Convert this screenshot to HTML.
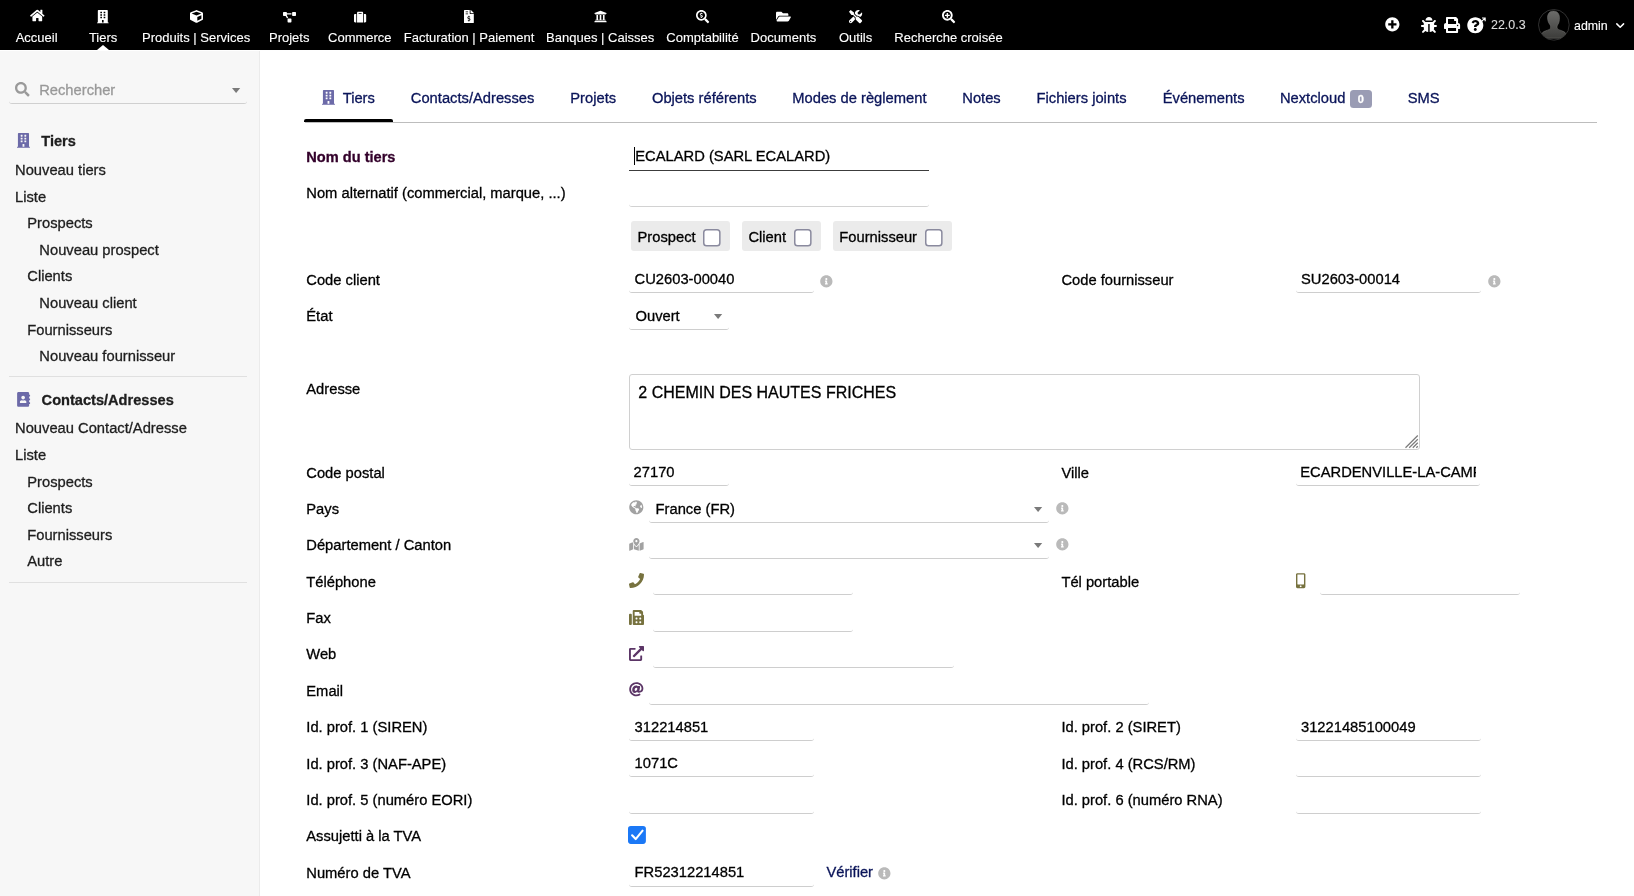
<!DOCTYPE html>
<html lang="fr">
<head>
<meta charset="utf-8">
<title>Tiers - ECALARD</title>
<style>
*{box-sizing:border-box;margin:0;padding:0}
html,body{width:1634px;height:896px;overflow:hidden;background:#fff}
body{font-family:"Liberation Sans",Arial,Helvetica,sans-serif;font-size:14.62px;color:#000;position:relative}
.abs{position:absolute;white-space:nowrap;line-height:1;-webkit-text-stroke:0.3px}
svg{position:absolute;overflow:visible}
#wrap{position:absolute;left:0;top:0;width:1634px;height:896px;will-change:transform}
#top{position:absolute;left:0;top:0;width:1634px;height:50px;background:#000}
#side{position:absolute;left:0;top:51px;width:260px;height:845px;background:#f7f7f7;border-right:1px solid #ebebeb}
</style>
</head>
<body>
<div id="wrap">
<div id="top">
<div class="abs" style="left:15.65px;top:31px;font-size:13px;color:#fff;-webkit-text-stroke:0.12px;">Accueil</div>
<svg style="left:29.79px;top:9.20px" width="14.62" height="13.00" viewBox="0 0 576 512" fill="#fff"><path d="M280.37 148.26L96 300.11V464a16 16 0 0 0 16 16l112.060-.29a16 16 0 0 0 15.920-16V368a16 16 0 0 1 16-16h64a16 16 0 0 1 16 16v95.640a16 16 0 0 0 16 16.050L464 480a16 16 0 0 0 16-16V300L295.670 148.260a12.190 12.190 0 0 0-15.300 0zM571.600 251.470L488 182.560V44.050a12 12 0 0 0-12-12h-56a12 12 0 0 0-12 12v72.610L318.470 43a48 48 0 0 0-61 0L4.340 251.470a12 12 0 0 0-1.600 16.900l25.500 31A12 12 0 0 0 45.150 301l235.220-193.740a12.190 12.190 0 0 1 15.300 0L530.900 301a12 12 0 0 0 16.900-1.600l25.500-31a12 12 0 0 0-1.700-16.930z"/></svg>
<div class="abs" style="left:88.90px;top:31px;font-size:13px;color:#fff;-webkit-text-stroke:0.12px;">Tiers</div>
<svg style="left:97.28px;top:9.60px" width="11.64" height="13.30" viewBox="0 0 448 512" fill="#fff"><path d="M436 480h-20V24c0-13.255-10.745-24-24-24H56C42.745 0 32 10.745 32 24v456H12c-6.627 0-12 5.373-12 12v20h448v-20c0-6.627-5.373-12-12-12zM128 76c0-6.627 5.373-12 12-12h40c6.627 0 12 5.373 12 12v40c0 6.627-5.373 12-12 12h-40c-6.627 0-12-5.373-12-12V76zm0 96c0-6.627 5.373-12 12-12h40c6.627 0 12 5.373 12 12v40c0 6.627-5.373 12-12 12h-40c-6.627 0-12-5.373-12-12v-40zm52 148h-40c-6.627 0-12-5.373-12-12v-40c0-6.627 5.373-12 12-12h40c6.627 0 12 5.373 12 12v40c0 6.627-5.373 12-12 12zm76 160h-64v-84c0-6.627 5.373-12 12-12h40c6.627 0 12 5.373 12 12v84zm64-172c0 6.627-5.373 12-12 12h-40c-6.627 0-12-5.373-12-12v-40c0-6.627 5.373-12 12-12h40c6.627 0 12 5.373 12 12v40zm0-96c0 6.627-5.373 12-12 12h-40c-6.627 0-12-5.373-12-12v-40c0-6.627 5.373-12 12-12h40c6.627 0 12 5.373 12 12v40zm0-96c0 6.627-5.373 12-12 12h-40c-6.627 0-12-5.373-12-12V76c0-6.627 5.373-12 12-12h40c6.627 0 12 5.373 12 12v40z"/></svg>
<div class="abs" style="left:142.03px;top:31px;font-size:13px;color:#fff;-webkit-text-stroke:0.12px;">Produits | Services</div>
<svg style="left:189.60px;top:9.80px" width="13.00" height="13.00" viewBox="0 0 512 512" fill="#fff"><path d="M239.1 6.3l-208 78c-18.700 7-31.100 25-31.100 45v225.100c0 18.200 10.300 34.800 26.500 42.900l208 104c13.500 6.800 29.400 6.800 42.900 0l208-104c16.300-8.100 26.500-24.800 26.500-42.900V129.300c0-20-12.400-37.900-31.100-44.900l-208-78C262 2.200 250 2.200 239.100 6.300zM256 68.400l192 72v1.100l-192 78-192-78v-1.100l192-72zm32 356V275.500l160-65v133.900l-160 80z"/></svg>
<div class="abs" style="left:268.97px;top:31px;font-size:13px;color:#fff;-webkit-text-stroke:0.12px;">Projets</div>
<svg style="left:282.70px;top:11.95px" width="13.00" height="10.40" viewBox="0 0 640 512" fill="#fff"><path d="M384 320H256c-17.670 0-32 14.330-32 32v128c0 17.670 14.330 32 32 32h128c17.670 0 32-14.330 32-32V352c0-17.670-14.330-32-32-32zM192 32c0-17.670-14.330-32-32-32H32C14.330 0 0 14.330 0 32v128c0 17.670 14.330 32 32 32h95.720l73.160 128.040C211.980 300.980 232.400 288 256 288h.28L192 175.510V128h224V64H192V32zM608 0H480c-17.670 0-32 14.330-32 32v128c0 17.670 14.330 32 32 32h128c17.670 0 32-14.330 32-32V32c0-17.670-14.330-32-32-32z"/></svg>
<div class="abs" style="left:328.02px;top:31px;font-size:13px;color:#fff;-webkit-text-stroke:0.12px;">Commerce</div>
<svg style="left:353.70px;top:10.75px" width="12.20" height="12.20" viewBox="0 0 512 512" fill="#fff"><path d="M128 480h256V80c0-26.500-21.500-48-48-48H176c-26.500 0-48 21.500-48 48v400zm64-384h128v32H192V96zm320 80v256c0 26.500-21.500 48-48 48h-48V128h48c26.500 0 48 21.500 48 48zM96 480H48c-26.500 0-48-21.500-48-48V176c0-26.500 21.500-48 48-48h48v352z"/></svg>
<div class="abs" style="left:403.72px;top:31px;font-size:13px;color:#fff;-webkit-text-stroke:0.12px;">Facturation | Paiement</div>
<svg style="left:464.09px;top:9.65px" width="9.82" height="13.10" viewBox="0 0 384 512" fill="#fff"><path d="M377 105L279.100 7c-4.500-4.500-10.600-7-17-7H256v128h128v-6.100c0-6.300-2.500-12.400-7-16.900zM64 62c0-4.420 3.580-8 8-8h80c4.420 0 8 3.580 8 8v20c0 4.420-3.580 8-8 8H72c-4.420 0-8-3.580-8-8V62zm0 100v-20c0-4.420 3.580-8 8-8h80c4.420 0 8 3.580 8 8v20c0 4.420-3.580 8-8 8H72c-4.420 0-8-3.580-8-8zm144 263.880V440c0 4.420-3.580 8-8 8h-16c-4.420 0-8-3.580-8-8v-24.290c-11.290-.58-22.270-4.520-31.370-11.350-3.900-2.930-4.100-8.770-.57-12.140l11.750-11.210c2.770-2.640 6.890-2.760 10.130-.73 3.870 2.420 8.260 3.720 12.820 3.720h28.110c6.500 0 11.800-5.920 11.800-13.190 0-5.950-3.610-11.190-8.770-12.730l-45-13.500c-18.590-5.580-31.580-23.420-31.580-43.390 0-24.520 19.050-44.440 42.670-45.070V232c0-4.420 3.580-8 8-8h16c4.420 0 8 3.580 8 8v24.290c11.290.58 22.270 4.510 31.370 11.350 3.900 2.930 4.100 8.770.57 12.140l-11.750 11.210c-2.770 2.640-6.890 2.760-10.130.73-3.870-2.430-8.260-3.720-12.820-3.720h-28.110c-6.500 0-11.800 5.920-11.800 13.190 0 5.950 3.610 11.190 8.770 12.730l45 13.500c18.590 5.580 31.580 23.420 31.580 43.390 0 24.530-19.050 44.440-42.670 45.070zM224 136V0H24C10.700 0 0 10.700 0 24v464c0 13.300 10.700 24 24 24h336c13.300 0 24-10.700 24-24V160H248c-13.200 0-24-10.800-24-24z"/></svg>
<div class="abs" style="left:546.12px;top:31px;font-size:13px;color:#fff;-webkit-text-stroke:0.12px;">Banques | Caisses</div>
<svg style="left:593.70px;top:9.80px" width="13.00" height="13.00" viewBox="0 0 512 512" fill="#fff"><path d="M496 128v16a8 8 0 0 1-8 8h-24v12c0 6.627-5.373 12-12 12H60c-6.627 0-12-5.373-12-12v-12H24a8 8 0 0 1-8-8v-16a8 8 0 0 1 4.941-7.392l232-88a7.996 7.996 0 0 1 6.118 0l232 88A8 8 0 0 1 496 128zm-24 304H40c-13.255 0-24 10.745-24 24v16a8 8 0 0 0 8 8h464a8 8 0 0 0 8-8v-16c0-13.255-10.745-24-24-24zM96 192v192H60c-6.627 0-12 5.373-12 12v20h416v-20c0-6.627-5.373-12-12-12h-36V192h-64v192h-64V192h-64v192h-64V192H96z"/></svg>
<div class="abs" style="left:666.37px;top:31px;font-size:13px;color:#fff;-webkit-text-stroke:0.12px;">Comptabilité</div>
<svg style="left:695.90px;top:9.70px" width="13.20" height="13.20" viewBox="0 0 512 512" fill="#fff"><path d="M505.040 442.660l-99.710-99.690c-4.500-4.500-10.600-7-17-7h-16.300c27.600-35.300 44-79.690 44-127.990C416.030 93.090 322.920 0 208.020 0S0 93.090 0 207.980s93.110 207.980 208.020 207.980c48.300 0 92.710-16.400 128.010-44v16.300c0 6.400 2.500 12.500 7 17l99.710 99.690c9.400 9.400 24.600 9.400 33.900 0l28.300-28.300c9.400-9.400 9.400-24.590.1-33.990zm-297.020-90.700c-79.540 0-144-64.340-144-143.980 0-79.530 64.350-143.980 144-143.980 79.540 0 144 64.340 144 143.980 0 79.530-64.350 143.980-144 143.980zm27.110-152.540l-45.010-13.500c-5.160-1.550-8.770-6.780-8.770-12.730 0-7.270 5.300-13.190 11.800-13.190h28.110c4.560 0 8.960 1.290 12.820 3.720 3.240 2.030 7.360 1.910 10.130-.73l11.750-11.210c3.530-3.370 3.330-9.210-.57-12.140-9.100-6.830-20.080-10.770-31.370-11.350V112c0-4.420-3.580-8-8-8h-16c-4.420 0-8 3.580-8 8v16.120c-23.630.63-42.680 20.550-42.680 45.070 0 19.970 12.990 37.810 31.580 43.390l45.010 13.500c5.160 1.550 8.770 6.780 8.770 12.730 0 7.270-5.300 13.190-11.800 13.190h-28.100c-4.560 0-8.960-1.290-12.820-3.720-3.240-2.030-7.360-1.910-10.130.73l-11.750 11.210c-3.530 3.370-3.330 9.210.57 12.140 9.100 6.830 20.080 10.770 31.370 11.350V304c0 4.420 3.580 8 8 8h16c4.420 0 8-3.580 8-8v-16.120c23.630-.63 42.680-20.540 42.680-45.070 0-19.970-12.990-37.810-31.590-43.390z"/></svg>
<div class="abs" style="left:750.53px;top:31px;font-size:13px;color:#fff;-webkit-text-stroke:0.12px;">Documents</div>
<svg style="left:775.98px;top:9.70px" width="14.85" height="13.20" viewBox="0 0 576 512" fill="#fff"><path d="M572.694 292.093L500.270 416.248A63.997 63.997 0 0 1 444.989 448H45.025c-18.523 0-30.064-20.093-20.731-36.093l72.424-124.155A64 64 0 0 1 152 256h399.964c18.523 0 30.064 20.093 20.730 36.093zM152 224h328v-48c0-26.510-21.490-48-48-48H272l-64-64H48C21.490 64 0 85.490 0 112v278.046l69.077-118.418C86.214 242.250 117.989 224 152 224z"/></svg>
<div class="abs" style="left:838.98px;top:31px;font-size:13px;color:#fff;-webkit-text-stroke:0.12px;">Outils</div>
<svg style="left:849.00px;top:9.70px" width="13.20" height="13.20" viewBox="0 0 512 512" fill="#fff"><path d="M501.100 395.700L384 278.600c-23.100-23.100-57.600-27.600-85.400-13.900L192 158.100V96L64 0 0 64l96 128h62.100l106.600 106.600c-13.600 27.800-9.200 62.300 13.900 85.400l117.100 117.100c14.600 14.600 38.200 14.600 52.700 0l52.700-52.700c14.500-14.600 14.500-38.200 0-52.700zM331.700 225c28.300 0 54.900 11 74.900 31l19.400 19.400c15.800-6.900 30.800-16.500 43.800-29.500 37.100-37.100 49.700-89.300 37.900-136.700-2.200-9-13.500-12.100-20.100-5.500l-74.400 74.400-67.900-11.300L334 98.900l74.400-74.400c6.600-6.600 3.400-17.900-5.700-20.200-47.400-11.700-99.600.9-136.600 37.900-28.500 28.500-41.900 66.100-41.200 103.600l82.100 82.100c8.100-1.900 16.500-2.900 24.700-2.900zm-103.900 82l-56.700-56.700L18.700 402.800c-25 25-25 65.500 0 90.500s65.500 25 90.500 0l123.600-123.600c-7.600-19.900-9.900-41.600-5-62.700zM64 472c-13.200 0-24-10.800-24-24 0-13.300 10.700-24 24-24s24 10.700 24 24c0 13.200-10.700 24-24 24z"/></svg>
<div class="abs" style="left:894.31px;top:31px;font-size:13px;color:#fff;-webkit-text-stroke:0.12px;">Recherche croisée</div>
<svg style="left:941.90px;top:9.70px" width="13.20" height="13.20" viewBox="0 0 512 512" fill="#fff"><path d="M304 192v32c0 6.600-5.400 12-12 12h-56v56c0 6.600-5.400 12-12 12h-32c-6.600 0-12-5.400-12-12v-56h-56c-6.600 0-12-5.400-12-12v-32c0-6.600 5.400-12 12-12h56v-56c0-6.600 5.400-12 12-12h32c6.600 0 12 5.400 12 12v56h56c6.600 0 12 5.400 12 12zm201 284.700L476.700 505c-9.400 9.400-24.600 9.400-33.900 0L343 405.300c-4.500-4.500-7-10.600-7-17V372c-35.300 27.600-79.700 44-128 44C93.100 416 0 322.900 0 208S93.100 0 208 0s208 93.100 208 208c0 48.300-16.400 92.700-44 128h16.300c6.400 0 12.500 2.500 17 7l99.700 99.700c9.300 9.400 9.300 24.600 0 34zM344 208c0-75.200-60.800-136-136-136S72 132.800 72 208s60.800 136 136 136 136-60.800 136-136z"/></svg>
<svg style="left:97px;top:45px" width="12" height="5" viewBox="0 0 12 5"><path d="M0 5L6 0L12 5Z" fill="#fff"/></svg>
<svg style="left:1385.40px;top:17.00px" width="14.70" height="14.70" viewBox="0 0 512 512" fill="#fff"><path d="M256 8C119 8 8 119 8 256s111 248 248 248 248-111 248-248S393 8 256 8zm144 276c0 6.600-5.400 12-12 12h-92v92c0 6.600-5.400 12-12 12h-56c-6.600 0-12-5.400-12-12v-92h-92c-6.600 0-12-5.400-12-12v-56c0-6.600 5.400-12 12-12h92v-92c0-6.600 5.400-12 12-12h56c6.600 0 12 5.400 12 12v92h92c6.600 0 12 5.400 12 12v56z"/></svg>
<svg style="left:1421.20px;top:17.20px" width="15.90" height="15.90" viewBox="0 0 512 512" fill="#fff"><path d="M511.988 288.900c-.478 17.430-15.217 31.100-32.653 31.100H424v16c0 21.864-4.882 42.584-13.600 61.145l60.228 60.228c12.496 12.497 12.496 32.758 0 45.255-12.498 12.497-32.759 12.496-45.256 0l-54.736-54.736C345.886 467.965 314.351 480 280 480V236c0-6.627-5.373-12-12-12h-24c-6.627 0-12 5.373-12 12v244c-34.351 0-65.886-12.035-90.636-32.108l-54.736 54.736c-12.498 12.497-32.759 12.496-45.256 0-12.496-12.497-12.496-32.758 0-45.255l60.228-60.228C92.882 378.584 88 357.864 88 336v-16H32.666C15.230 320 .491 306.330.013 288.900-.484 270.816 14.028 256 32 256h56v-58.745l-46.628-46.628c-12.496-12.497-12.496-32.758 0-45.255 12.498-12.497 32.758-12.497 45.256 0L141.255 160h229.489l54.627-54.627c12.498-12.497 32.758-12.497 45.256 0 12.496 12.497 12.496 32.758 0 45.255L424 197.255V256h56c17.972 0 32.484 14.816 31.988 32.900zM257 0c-61.856 0-112 50.144-112 112h224C369 50.144 318.856 0 257 0z"/></svg>
<svg style="left:1443.90px;top:17.20px" width="16.10" height="16.10" viewBox="0 0 512 512" fill="#fff"><path d="M448 192V77.250c0-8.490-3.370-16.620-9.370-22.630L393.370 9.370c-6-6-14.140-9.370-22.630-9.370H96C78.330 0 64 14.330 64 32v160c-35.350 0-64 28.650-64 64v112c0 8.840 7.160 16 16 16h48v96c0 17.670 14.330 32 32 32h320c17.670 0 32-14.330 32-32v-96h48c8.840 0 16-7.160 16-16V256c0-35.350-28.650-64-64-64zm-64 256H128v-96h256v96zm0-224H128V64h192v48c0 8.840 7.160 16 16 16h48v96zm48 72c-13.250 0-24-10.750-24-24 0-13.260 10.750-24 24-24s24 10.740 24 24c0 13.250-10.750 24-24 24z"/></svg>
<svg style="left:1467.00px;top:16.60px" width="16.60" height="16.60" viewBox="0 0 512 512" fill="#fff"><path d="M504 256c0 136.997-111.043 248-248 248S8 392.997 8 256C8 119.083 119.043 8 256 8s248 111.083 248 248zM262.655 90c-54.497 0-89.255 22.957-116.549 63.758-3.536 5.286-2.353 12.415 2.715 16.258l34.699 26.310c5.205 3.947 12.621 3.008 16.665-2.122 17.864-22.658 30.113-35.797 57.303-35.797 20.429 0 45.698 13.148 45.698 32.958 0 14.976-12.363 22.667-32.534 33.976C247.128 238.528 216 254.941 216 296v4c0 6.627 5.373 12 12 12h56c6.627 0 12-5.373 12-12v-1.333c0-28.462 83.186-29.647 83.186-106.667 0-58.002-60.165-102-116.531-102zM256 338c-25.365 0-46 20.635-46 46 0 25.364 20.635 46 46 46s46-20.636 46-46c0-25.365-20.635-46-46-46z"/><path d="M462 30H560V128M554 36L430 160" fill="none" stroke="#fff" stroke-width="36"/></svg>
<div class="abs" style="left:1491.00px;top:19px;font-size:12.45px;color:#dcdcdc;-webkit-text-stroke:0.1px;">22.0.3</div>
<svg style="left:1538.2px;top:9px" width="31.7" height="31.7" viewBox="0 0 32 32"><defs><clipPath id="av"><circle cx="16" cy="16" r="15.2"/></clipPath><linearGradient id="avg" x1="0" y1="0" x2="0" y2="1"><stop offset="0" stop-color="#6c6c6a"/><stop offset="0.55" stop-color="#525250"/><stop offset="1" stop-color="#3c3c3a"/></linearGradient></defs><circle cx="16" cy="16" r="15.5" fill="#000" stroke="#363636" stroke-width="0.9"/><g clip-path="url(#av)"><path d="M15.6 2C12 2 9.600 4.800 9.600 8.600C9.600 11.500 10.600 14 12 15.800C12.900 17 12.900 18.600 12.500 19.600C11.800 21 8.500 21.600 6 22.800C4.200 23.700 3.600 25.200 3.600 27L3.600 29.500L28.400 29.500L28.400 27C28.400 25.200 27.800 23.700 26 22.800C23.500 21.600 20.200 21 19.500 19.600C19.100 18.600 19.100 17 20 15.800C21.400 14 21.700 11.500 21.700 8.600C21.700 4.800 19.200 2 15.600 2Z" fill="url(#avg)" stroke="#7c7c7a" stroke-width="0.5"/></g></svg>
<div class="abs" style="left:1574.00px;top:20px;font-size:12.4px;color:#fff;-webkit-text-stroke:0.12px;">admin</div>
<svg style="left:1615.6px;top:22.6px" width="8.4" height="5.4" viewBox="0 0 8.4 5.4" fill="none" stroke="#fff" stroke-width="1.5" stroke-linecap="round" stroke-linejoin="round"><path d="M0.8 0.9 4.2 4.3 7.6 0.9"/></svg>
</div>
<div id="side"></div>
<svg style="left:15.10px;top:82.30px" width="14.60" height="14.60" viewBox="0 0 512 512" fill="#9a9a9a"><path d="M505 442.700L405.300 343c-4.500-4.500-10.600-7-17-7H372c27.600-35.300 44-79.700 44-128C416 93.100 322.900 0 208 0S0 93.100 0 208s93.100 208 208 208c48.300 0 92.700-16.400 128-44v16.300c0 6.400 2.500 12.500 7 17l99.700 99.700c9.400 9.400 24.600 9.400 33.900 0l28.300-28.300c9.400-9.400 9.400-24.600.1-34zM208 336c-70.700 0-128-57.200-128-128 0-70.700 57.200-128 128-128 70.700 0 128 57.200 128 128 0 70.700-57.200 128-128 128z"/></svg>
<div class="abs" style="left:39.20px;top:83px;font-size:14.72px;color:#999;">Rechercher</div>
<svg style="left:232.0px;top:88.2px" width="8.2" height="5.1" viewBox="0 0 8.2 5.1"><path d="M0 0H8.2L4.1 5.1Z" fill="#7a7a7a"/></svg>
<div class="abs" style="left:9.20px;top:97.30px;width:237.60px;height:7px;border-bottom:1px solid #d0d0d0;border-radius:0 0 3px 3px;"></div>
<svg style="left:17.10px;top:133.00px" width="12.95" height="14.80" viewBox="0 0 448 512" fill="#6c6aa8"><path d="M436 480h-20V24c0-13.255-10.745-24-24-24H56C42.745 0 32 10.745 32 24v456H12c-6.627 0-12 5.373-12 12v20h448v-20c0-6.627-5.373-12-12-12zM128 76c0-6.627 5.373-12 12-12h40c6.627 0 12 5.373 12 12v40c0 6.627-5.373 12-12 12h-40c-6.627 0-12-5.373-12-12V76zm0 96c0-6.627 5.373-12 12-12h40c6.627 0 12 5.373 12 12v40c0 6.627-5.373 12-12 12h-40c-6.627 0-12-5.373-12-12v-40zm52 148h-40c-6.627 0-12-5.373-12-12v-40c0-6.627 5.373-12 12-12h40c6.627 0 12 5.373 12 12v40c0 6.627-5.373 12-12 12zm76 160h-64v-84c0-6.627 5.373-12 12-12h40c6.627 0 12 5.373 12 12v84zm64-172c0 6.627-5.373 12-12 12h-40c-6.627 0-12-5.373-12-12v-40c0-6.627 5.373-12 12-12h40c6.627 0 12 5.373 12 12v40zm0-96c0 6.627-5.373 12-12 12h-40c-6.627 0-12-5.373-12-12v-40c0-6.627 5.373-12 12-12h40c6.627 0 12 5.373 12 12v40zm0-96c0 6.627-5.373 12-12 12h-40c-6.627 0-12-5.373-12-12V76c0-6.627 5.373-12 12-12h40c6.627 0 12 5.373 12 12v40z"/></svg>
<div class="abs" style="left:41.30px;top:134px;font-size:14.6px;color:#1e1e1e;font-weight:bold;">Tiers</div>
<div class="abs" style="left:15.05px;top:163px;font-size:14.72px;color:#1e1e1e;">Nouveau tiers</div>
<div class="abs" style="left:15.05px;top:190px;font-size:14.72px;color:#1e1e1e;">Liste</div>
<div class="abs" style="left:27.25px;top:216px;font-size:14.72px;color:#1e1e1e;">Prospects</div>
<div class="abs" style="left:39.35px;top:243px;font-size:14.72px;color:#1e1e1e;">Nouveau prospect</div>
<div class="abs" style="left:27.25px;top:269px;font-size:14.72px;color:#1e1e1e;">Clients</div>
<div class="abs" style="left:39.35px;top:296px;font-size:14.72px;color:#1e1e1e;">Nouveau client</div>
<div class="abs" style="left:27.25px;top:323px;font-size:14.72px;color:#1e1e1e;">Fournisseurs</div>
<div class="abs" style="left:39.35px;top:349px;font-size:14.72px;color:#1e1e1e;">Nouveau fournisseur</div>
<div class="abs" style="left:9.20px;top:376.00px;width:237.60px;height:1.00px;background:#e0e0e0;"></div>
<svg style="left:16.80px;top:392.20px" width="13.20" height="14.80" viewBox="0 0 448 512" fill="#6c6aa8"><path d="M436 160c6.600 0 12-5.400 12-12v-40c0-6.600-5.400-12-12-12h-20V48c0-26.500-21.500-48-48-48H48C21.500 0 0 21.500 0 48v416c0 26.500 21.500 48 48 48h320c26.500 0 48-21.500 48-48v-48h20c6.600 0 12-5.400 12-12v-40c0-6.600-5.400-12-12-12h-20v-64h20c6.600 0 12-5.400 12-12v-40c0-6.600-5.400-12-12-12h-20v-64h20zm-228-32c35.300 0 64 28.700 64 64s-28.700 64-64 64-64-28.700-64-64 28.700-64 64-64zm112 236.800c0 10.600-10 19.200-22.400 19.200H118.400C106 384 96 375.400 96 364.800v-19.200c0-31.800 30.100-57.600 67.200-57.600h5c12.300 5.100 25.700 8 39.800 8s27.600-2.900 39.800-8h5c37.100 0 67.200 25.800 67.200 57.600v19.200z"/></svg>
<div class="abs" style="left:41.60px;top:393px;font-size:14.6px;color:#1e1e1e;font-weight:bold;">Contacts/Adresses</div>
<div class="abs" style="left:15.05px;top:421px;font-size:14.72px;color:#1e1e1e;">Nouveau Contact/Adresse</div>
<div class="abs" style="left:15.05px;top:448px;font-size:14.72px;color:#1e1e1e;">Liste</div>
<div class="abs" style="left:27.25px;top:475px;font-size:14.72px;color:#1e1e1e;">Prospects</div>
<div class="abs" style="left:27.25px;top:501px;font-size:14.72px;color:#1e1e1e;">Clients</div>
<div class="abs" style="left:27.25px;top:528px;font-size:14.72px;color:#1e1e1e;">Fournisseurs</div>
<div class="abs" style="left:27.25px;top:554px;font-size:14.72px;color:#1e1e1e;">Autre</div>
<div class="abs" style="left:9.20px;top:582.00px;width:237.60px;height:1.00px;background:#e0e0e0;"></div>
<svg style="left:322.20px;top:90.00px" width="12.95" height="14.80" viewBox="0 0 448 512" fill="#6c6aa8"><path d="M436 480h-20V24c0-13.255-10.745-24-24-24H56C42.745 0 32 10.745 32 24v456H12c-6.627 0-12 5.373-12 12v20h448v-20c0-6.627-5.373-12-12-12zM128 76c0-6.627 5.373-12 12-12h40c6.627 0 12 5.373 12 12v40c0 6.627-5.373 12-12 12h-40c-6.627 0-12-5.373-12-12V76zm0 96c0-6.627 5.373-12 12-12h40c6.627 0 12 5.373 12 12v40c0 6.627-5.373 12-12 12h-40c-6.627 0-12-5.373-12-12v-40zm52 148h-40c-6.627 0-12-5.373-12-12v-40c0-6.627 5.373-12 12-12h40c6.627 0 12 5.373 12 12v40c0 6.627-5.373 12-12 12zm76 160h-64v-84c0-6.627 5.373-12 12-12h40c6.627 0 12 5.373 12 12v84zm64-172c0 6.627-5.373 12-12 12h-40c-6.627 0-12-5.373-12-12v-40c0-6.627 5.373-12 12-12h40c6.627 0 12 5.373 12 12v40zm0-96c0 6.627-5.373 12-12 12h-40c-6.627 0-12-5.373-12-12v-40c0-6.627 5.373-12 12-12h40c6.627 0 12 5.373 12 12v40zm0-96c0 6.627-5.373 12-12 12h-40c-6.627 0-12-5.373-12-12V76c0-6.627 5.373-12 12-12h40c6.627 0 12 5.373 12 12v40z"/></svg>
<div class="abs" style="left:342.70px;top:91px;font-size:14.72px;color:#0a1459;">Tiers</div>
<div class="abs" style="left:410.80px;top:91px;font-size:14.72px;color:#0a1459;">Contacts/Adresses</div>
<div class="abs" style="left:570.30px;top:91px;font-size:14.72px;color:#0a1459;">Projets</div>
<div class="abs" style="left:651.95px;top:91px;font-size:14.72px;color:#0a1459;">Objets référents</div>
<div class="abs" style="left:792.30px;top:91px;font-size:14.72px;color:#0a1459;">Modes de règlement</div>
<div class="abs" style="left:962.25px;top:91px;font-size:14.72px;color:#0a1459;">Notes</div>
<div class="abs" style="left:1036.55px;top:91px;font-size:14.72px;color:#0a1459;">Fichiers joints</div>
<div class="abs" style="left:1162.75px;top:91px;font-size:14.72px;color:#0a1459;">Événements</div>
<div class="abs" style="left:1279.95px;top:91px;font-size:14.72px;color:#0a1459;">Nextcloud</div>
<div class="abs" style="left:1407.75px;top:91px;font-size:14.72px;color:#0a1459;">SMS</div>
<div class="abs" style="left:1349.9px;top:90.2px;width:22px;height:17.6px;background:#9a9cb4;border-radius:3.5px;color:#fff;font-weight:bold;font-size:11px;line-height:19px;text-align:center">0</div>
<div class="abs" style="left:304.50px;top:122.00px;width:1292.50px;height:1.00px;background:#bdbdbd;"></div>
<div class="abs" style="left:304.4px;top:119.2px;width:88.6px;height:3.3px;background:#000;border-radius:2px 2px 0 0"></div>
<div class="abs" style="left:306.30px;top:150px;font-size:14.6px;color:#33002b;font-weight:bold;">Nom du tiers</div>
<div class="abs" style="left:306.30px;top:186px;font-size:14.72px;">Nom alternatif (commercial, marque, ...)</div>
<div class="abs" style="left:306.30px;top:273px;font-size:14.72px;">Code client</div>
<div class="abs" style="left:306.30px;top:309px;font-size:14.72px;">État</div>
<div class="abs" style="left:306.30px;top:382px;font-size:14.72px;">Adresse</div>
<div class="abs" style="left:306.30px;top:466px;font-size:14.72px;">Code postal</div>
<div class="abs" style="left:306.30px;top:502px;font-size:14.72px;">Pays</div>
<div class="abs" style="left:306.30px;top:538px;font-size:14.72px;">Département / Canton</div>
<div class="abs" style="left:306.30px;top:575px;font-size:14.72px;">Téléphone</div>
<div class="abs" style="left:306.30px;top:611px;font-size:14.72px;">Fax</div>
<div class="abs" style="left:306.30px;top:647px;font-size:14.72px;">Web</div>
<div class="abs" style="left:306.30px;top:684px;font-size:14.72px;">Email</div>
<div class="abs" style="left:306.30px;top:720px;font-size:14.72px;">Id. prof. 1 (SIREN)</div>
<div class="abs" style="left:306.30px;top:757px;font-size:14.72px;">Id. prof. 3 (NAF-APE)</div>
<div class="abs" style="left:306.30px;top:793px;font-size:14.72px;">Id. prof. 5 (numéro EORI)</div>
<div class="abs" style="left:306.30px;top:829px;font-size:14.72px;">Assujetti à la TVA</div>
<div class="abs" style="left:306.30px;top:866px;font-size:14.72px;">Numéro de TVA</div>
<div class="abs" style="left:1061.40px;top:273px;font-size:14.72px;">Code fournisseur</div>
<div class="abs" style="left:1061.40px;top:466px;font-size:14.72px;">Ville</div>
<div class="abs" style="left:1061.40px;top:575px;font-size:14.72px;">Tél portable</div>
<div class="abs" style="left:1061.40px;top:720px;font-size:14.72px;">Id. prof. 2 (SIRET)</div>
<div class="abs" style="left:1061.40px;top:757px;font-size:14.72px;">Id. prof. 4 (RCS/RM)</div>
<div class="abs" style="left:1061.40px;top:793px;font-size:14.72px;">Id. prof. 6 (numéro RNA)</div>
<div class="abs" style="left:634.40px;top:147.20px;width:1.00px;height:17.40px;background:#000;"></div>
<div class="abs" style="left:635.30px;top:149px;font-size:14.72px;">ECALARD (SARL ECALARD)</div>
<div class="abs" style="left:629.20px;top:164.40px;width:300.10px;height:7px;border-bottom:1px solid #3c3c3c;border-radius:0 0 0px 0px;"></div>
<div class="abs" style="left:629.20px;top:200.30px;width:300.10px;height:7px;border-bottom:1px solid #d2d2d2;border-radius:0 0 3px 3px;"></div>
<div class="abs" style="left:631.2px;top:221.3px;width:98.7px;height:29.4px;background:#ebebeb;border-radius:3px"></div>
<div class="abs" style="left:637.50px;top:230px;font-size:14.72px;">Prospect</div>
<svg style="left:703.3px;top:229.2px" width="17.6" height="17.5" viewBox="0 0 17.6 17.5"><rect x="0.75" y="0.75" width="16.1" height="16" rx="2.8" fill="#fff" stroke="#8a8a9e" stroke-width="1.5"/></svg>
<div class="abs" style="left:742.0px;top:221.3px;width:78.9px;height:29.4px;background:#ebebeb;border-radius:3px"></div>
<div class="abs" style="left:748.40px;top:230px;font-size:14.72px;">Client</div>
<svg style="left:794.4px;top:229.2px" width="17.6" height="17.5" viewBox="0 0 17.6 17.5"><rect x="0.75" y="0.75" width="16.1" height="16" rx="2.8" fill="#fff" stroke="#8a8a9e" stroke-width="1.5"/></svg>
<div class="abs" style="left:833.1px;top:221.3px;width:119.1px;height:29.4px;background:#ebebeb;border-radius:3px"></div>
<div class="abs" style="left:839.30px;top:230px;font-size:14.72px;">Fournisseur</div>
<svg style="left:925.2px;top:229.2px" width="17.6" height="17.5" viewBox="0 0 17.6 17.5"><rect x="0.75" y="0.75" width="16.1" height="16" rx="2.8" fill="#fff" stroke="#8a8a9e" stroke-width="1.5"/></svg>
<div class="abs" style="left:634.60px;top:272px;font-size:14.72px;">CU2603-00040</div>
<div class="abs" style="left:629.20px;top:286.20px;width:184.70px;height:7px;border-bottom:1px solid #cecece;border-radius:0 0 3px 3px;"></div>
<svg style="left:820.45px;top:274.85px" width="12.70" height="12.70" viewBox="0 0 512 512" fill="#bababa"><path d="M256 8C119.043 8 8 119.083 8 256c0 136.997 111.043 248 248 248s248-111.003 248-248C504 119.083 392.957 8 256 8zm0 110c23.196 0 42 18.804 42 42s-18.804 42-42 42-42-18.804-42-42 18.804-42 42-42zm56 254c0 6.627-5.373 12-12 12h-88c-6.627 0-12-5.373-12-12v-24c0-6.627 5.373-12 12-12h12v-64h-12c-6.627 0-12-5.373-12-12v-24c0-6.627 5.373-12 12-12h64c6.627 0 12 5.373 12 12v100h12c6.627 0 12 5.373 12 12v24z"/></svg>
<div class="abs" style="left:1301.00px;top:272px;font-size:14.72px;">SU2603-00014</div>
<div class="abs" style="left:1296.20px;top:286.20px;width:184.40px;height:7px;border-bottom:1px solid #cecece;border-radius:0 0 3px 3px;"></div>
<svg style="left:1487.55px;top:274.85px" width="12.70" height="12.70" viewBox="0 0 512 512" fill="#bababa"><path d="M256 8C119.043 8 8 119.083 8 256c0 136.997 111.043 248 248 248s248-111.003 248-248C504 119.083 392.957 8 256 8zm0 110c23.196 0 42 18.804 42 42s-18.804 42-42 42-42-18.804-42-42 18.804-42 42-42zm56 254c0 6.627-5.373 12-12 12h-88c-6.627 0-12-5.373-12-12v-24c0-6.627 5.373-12 12-12h12v-64h-12c-6.627 0-12-5.373-12-12v-24c0-6.627 5.373-12 12-12h64c6.627 0 12 5.373 12 12v100h12c6.627 0 12 5.373 12 12v24z"/></svg>
<div class="abs" style="left:635.50px;top:309px;font-size:14.72px;">Ouvert</div>
<svg style="left:713.9px;top:314.2px" width="8.2" height="5.1" viewBox="0 0 8.2 5.1"><path d="M0 0H8.2L4.1 5.1Z" fill="#7a7a7a"/></svg>
<div class="abs" style="left:629.20px;top:322.80px;width:99.80px;height:7px;border-bottom:1px solid #cecece;border-radius:0 0 3px 3px;"></div>
<div class="abs" style="left:629.2px;top:374.2px;width:791px;height:75.8px;border:1px solid #d0d0d0;border-radius:3px;background:#fff"></div>
<div class="abs" style="left:638.30px;top:385px;font-size:16px;">2 CHEMIN DES HAUTES FRICHES</div>
<svg style="left:1405px;top:435px" width="13" height="13" viewBox="0 0 13 13" stroke="#7c7c7c" stroke-width="1.25" fill="none"><path d="M0.500 12.800 12.800 0.500M4.200 12.800 12.800 4.200M7.800 12.800 12.800 7.800M11.300 12.800 12.800 11.300"/></svg>
<div class="abs" style="left:633.60px;top:465px;font-size:14.72px;">27170</div>
<div class="abs" style="left:629.20px;top:479.00px;width:99.60px;height:7px;border-bottom:1px solid #cecece;border-radius:0 0 3px 3px;"></div>
<div class="abs" style="left:1296.2px;top:462px;width:179.6px;height:22px;overflow:hidden"><div class="abs" style="left:4.1px;top:3px;font-size:14.72px">ECARDENVILLE-LA-CAMPAGNE</div></div>
<div class="abs" style="left:1296.20px;top:479.00px;width:183.80px;height:7px;border-bottom:1px solid #cecece;border-radius:0 0 3px 3px;"></div>
<svg style="left:629.00px;top:500.20px" width="14.60" height="14.60" viewBox="0 0 496 512" fill="#a2a2a2"><path d="M248 8C111.030 8 0 119.030 0 256s111.030 248 248 248 248-111.030 248-248S384.970 8 248 8zm82.290 357.600c-3.900 3.880-7.990 7.950-11.310 11.280-2.990 3-5.100 6.700-6.170 10.710-1.510 5.660-2.730 11.380-4.770 16.870l-17.390 46.850c-13.760 3-28 4.690-42.650 4.690v-27.380c1.690-12.620-7.640-36.260-22.630-51.250-6-6-9.370-14.140-9.370-22.630v-32.010c0-11.640-6.270-22.340-16.460-27.970-14.370-7.950-34.810-19.060-48.810-26.110-11.480-5.780-22.100-13.140-31.650-21.750l-.8-.72a114.792 114.792 0 0 1-18.060-20.740c-9.380-13.770-24.660-36.420-34.590-51.140 20.470-45.500 57.360-82.040 103.200-101.890l24.010 12.010C203.480 89.740 216 82.010 216 70.110v-11.300c7.990-1.290 16.120-2.110 24.390-2.420l28.300 28.300c6.250 6.250 6.250 16.380 0 22.630L264 112l-10.340 10.340c-3.120 3.120-3.120 8.190 0 11.310l4.690 4.690c3.120 3.120 3.120 8.190 0 11.310l-8 8a8.008 8.008 0 0 1-5.660 2.340h-8.990c-2.080 0-4.080.81-5.580 2.270l-9.920 9.650a8.008 8.008 0 0 0-1.580 9.310l15.590 31.190c2.660 5.320-1.210 11.580-7.150 11.580h-5.640c-1.930 0-3.790-.7-5.240-1.960l-9.280-8.060a16.017 16.017 0 0 0-15.550-3.100l-31.170 10.390a11.950 11.950 0 0 0-8.170 11.340c0 4.530 2.560 8.660 6.610 10.690l11.080 5.540c9.410 4.710 19.790 7.160 30.310 7.160s22.590 27.290 32 32h66.750c8.490 0 16.620 3.370 22.630 9.370l13.690 13.690a30.503 30.503 0 0 1 8.930 21.570 46.536 46.536 0 0 1-13.720 32.980zM417 274.250c-5.790-1.450-10.840-5-14.150-9.970l-17.980-26.970a23.970 23.970 0 0 1 0-26.620l19.590-29.380c2.320-3.470 5.500-6.290 9.240-8.150l12.980-6.490C440.200 193.590 448 223.870 448 256c0 8.670-.74 17.160-1.820 25.540L417 274.250z"/></svg>
<div class="abs" style="left:655.60px;top:502px;font-size:14.72px;">France (FR)</div>
<div class="abs" style="left:648.90px;top:515.90px;width:399.70px;height:7px;border-bottom:1px solid #cecece;border-radius:0 0 3px 3px;"></div>
<svg style="left:1034.0px;top:506.8px" width="8.2" height="5.1" viewBox="0 0 8.2 5.1"><path d="M0 0H8.2L4.1 5.1Z" fill="#7a7a7a"/></svg>
<svg style="left:1056.10px;top:501.85px" width="12.70" height="12.70" viewBox="0 0 512 512" fill="#bababa"><path d="M256 8C119.043 8 8 119.083 8 256c0 136.997 111.043 248 248 248s248-111.003 248-248C504 119.083 392.957 8 256 8zm0 110c23.196 0 42 18.804 42 42s-18.804 42-42 42-42-18.804-42-42 18.804-42 42-42zm56 254c0 6.627-5.373 12-12 12h-88c-6.627 0-12-5.373-12-12v-24c0-6.627 5.373-12 12-12h12v-64h-12c-6.627 0-12-5.373-12-12v-24c0-6.627 5.373-12 12-12h64c6.627 0 12 5.373 12 12v100h12c6.627 0 12 5.373 12 12v24z"/></svg>
<svg style="left:628.80px;top:537.80px" width="14.80" height="12.80" viewBox="0 0 576 512" fill="#a2a2a2"><path d="M288 0c-69.590 0-126 56.410-126 126 0 56.260 82.350 158.800 113.900 196.020 6.390 7.540 17.820 7.540 24.200 0C331.650 284.800 414 182.260 414 126 414 56.410 357.590 0 288 0zm0 168c-23.200 0-42-18.800-42-42s18.800-42 42-42 42 18.800 42 42-18.800 42-42 42zM20.120 215.950A32.006 32.006 0 0 0 0 245.660v250.320c0 11.320 11.430 19.060 21.940 14.860L160 448V214.920c-8.840-15.980-16.070-31.540-21.250-46.420L20.120 215.950zM288 359.670c-14.070 0-27.380-6.180-36.510-16.960-19.660-23.200-40.570-49.620-59.490-76.720v182l192 64V266c-18.920 27.090-39.820 53.520-59.490 76.720-9.130 10.770-22.440 16.950-36.510 16.950zm266.060-198.510L416 224v288l139.880-55.950A31.996 31.996 0 0 0 576 426.340V176.020c0-11.320-11.430-19.060-21.940-14.860z"/></svg>
<div class="abs" style="left:648.90px;top:552.00px;width:399.70px;height:7px;border-bottom:1px solid #cecece;border-radius:0 0 3px 3px;"></div>
<svg style="left:1034.0px;top:542.9px" width="8.2" height="5.1" viewBox="0 0 8.2 5.1"><path d="M0 0H8.2L4.1 5.1Z" fill="#7a7a7a"/></svg>
<svg style="left:1056.10px;top:537.95px" width="12.70" height="12.70" viewBox="0 0 512 512" fill="#bababa"><path d="M256 8C119.043 8 8 119.083 8 256c0 136.997 111.043 248 248 248s248-111.003 248-248C504 119.083 392.957 8 256 8zm0 110c23.196 0 42 18.804 42 42s-18.804 42-42 42-42-18.804-42-42 18.804-42 42-42zm56 254c0 6.627-5.373 12-12 12h-88c-6.627 0-12-5.373-12-12v-24c0-6.627 5.373-12 12-12h12v-64h-12c-6.627 0-12-5.373-12-12v-24c0-6.627 5.373-12 12-12h64c6.627 0 12 5.373 12 12v100h12c6.627 0 12 5.373 12 12v24z"/></svg>
<svg style="left:629.00px;top:572.80px" width="15.00" height="15.00" viewBox="0 0 512 512" fill="#77723f"><path d="M493.400 24.600l-104-24c-11.300-2.600-22.900 3.300-27.500 13.900l-48 112c-4.200 9.800-1.400 21.300 6.900 28l60.600 49.600c-36 76.700-98.900 140.500-177.200 177.200l-49.600-60.600c-6.800-8.300-18.200-11.100-28-6.900l-112 48C3.900 366.500-2 378.100.6 389.400l24 104C27.100 504.200 36.700 512 48 512c256.100 0 464-207.500 464-464 0-11.200-7.700-20.900-18.600-23.400z"/></svg>
<div class="abs" style="left:653.40px;top:588.40px;width:199.20px;height:7px;border-bottom:1px solid #cecece;border-radius:0 0 3px 3px;"></div>
<svg style="left:1296.40px;top:572.60px" width="9.40" height="15.40" viewBox="0 0 320 512" fill="#77723f"><path d="M272 0H48C21.500 0 0 21.500 0 48v416c0 26.500 21.500 48 48 48h224c26.500 0 48-21.500 48-48V48c0-26.500-21.500-48-48-48zM160 480c-17.700 0-32-14.300-32-32s14.300-32 32-32 32 14.300 32 32-14.300 32-32 32zm112-108c0 6.600-5.400 12-12 12H60c-6.600 0-12-5.400-12-12V60c0-6.600 5.400-12 12-12h200c6.600 0 12 5.400 12 12v312z"/></svg>
<div class="abs" style="left:1320.20px;top:588.40px;width:199.60px;height:7px;border-bottom:1px solid #cecece;border-radius:0 0 3px 3px;"></div>
<svg style="left:629.00px;top:610.00px" width="15.00" height="15.00" viewBox="0 0 512 512" fill="#77723f"><path d="M480 160V77.250a32 32 0 0 0-9.380-22.630L425.370 9.370A32 32 0 0 0 402.750 0H160a32 32 0 0 0-32 32v448a32 32 0 0 0 32 32h320a32 32 0 0 0 32-32V192a32 32 0 0 0-32-32zM288 432a16 16 0 0 1-16 16h-32a16 16 0 0 1-16-16v-32a16 16 0 0 1 16-16h32a16 16 0 0 1 16 16zm0-128a16 16 0 0 1-16 16h-32a16 16 0 0 1-16-16v-32a16 16 0 0 1 16-16h32a16 16 0 0 1 16 16zm128 128a16 16 0 0 1-16 16h-32a16 16 0 0 1-16-16v-32a16 16 0 0 1 16-16h32a16 16 0 0 1 16 16zm0-128a16 16 0 0 1-16 16h-32a16 16 0 0 1-16-16v-32a16 16 0 0 1 16-16h32a16 16 0 0 1 16 16zm0-112H192V64h160v48a16 16 0 0 0 16 16h48zM64 128H32a32 32 0 0 0-32 32v320a32 32 0 0 0 32 32h32a32 32 0 0 0 32-32V160a32 32 0 0 0-32-32z"/></svg>
<div class="abs" style="left:653.40px;top:624.60px;width:199.20px;height:7px;border-bottom:1px solid #cecece;border-radius:0 0 3px 3px;"></div>
<svg style="left:629.00px;top:645.80px" width="15.00" height="15.00" viewBox="0 0 512 512" fill="#5b3566"><path d="M432 320H400a16 16 0 0 0-16 16V448H64V128H208a16 16 0 0 0 16-16V80a16 16 0 0 0-16-16H48A48 48 0 0 0 0 112V464a48 48 0 0 0 48 48H400a48 48 0 0 0 48-48V336A16 16 0 0 0 432 320ZM488 0h-128c-21.370 0-32.050 25.910-17 41l35.730 35.730L135 320.370a24 24 0 0 0 0 34L157.670 377a24 24 0 0 0 34 0L435.280 133.320 471 169c15 15 41 4.500 41-17V24A24 24 0 0 0 488 0Z"/></svg>
<div class="abs" style="left:653.40px;top:660.80px;width:300.20px;height:7px;border-bottom:1px solid #cecece;border-radius:0 0 3px 3px;"></div>
<svg style="left:629.20px;top:682.20px" width="14.60" height="14.60" viewBox="0 0 512 512" fill="#5b3566"><path d="M256 8C118.941 8 8 118.919 8 256c0 137.059 110.919 248 248 248 48.154 0 95.342-14.140 135.408-40.223 12.005-7.815 14.625-24.288 5.552-35.372l-10.177-12.433c-7.671-9.371-21.179-11.667-31.373-5.129C325.920 429.757 291.314 440 256 440c-101.458 0-184-82.542-184-184S154.542 72 256 72c100.139 0 184 57.619 184 160 0 38.786-21.093 79.742-58.170 83.693-17.349-.454-16.910-12.857-13.476-30.024l23.433-121.110C394.653 149.750 383.308 136 368.225 136h-44.981a13.518 13.518 0 0 0-13.432 11.993l-.010.092c-14.697-17.901-40.448-21.775-59.971-21.775-74.580 0-137.831 62.234-137.831 151.460 0 65.303 36.785 105.870 96 105.870 26.984 0 57.369-15.637 74.991-38.333 9.522 34.104 40.613 34.103 70.710 34.103C462.609 379.410 504 307.798 504 232 504 95.653 394.023 8 256 8zm-21.680 304.430c-22.249 0-36.070-15.623-36.070-40.771 0-44.993 30.779-72.729 58.630-72.729 22.292 0 35.601 15.241 35.601 40.770 0 45.061-33.875 72.730-58.161 72.730z"/></svg>
<div class="abs" style="left:648.60px;top:698.20px;width:500.00px;height:7px;border-bottom:1px solid #cecece;border-radius:0 0 3px 3px;"></div>
<div class="abs" style="left:634.60px;top:720px;font-size:14.72px;">312214851</div>
<div class="abs" style="left:629.20px;top:733.80px;width:184.70px;height:7px;border-bottom:1px solid #cecece;border-radius:0 0 3px 3px;"></div>
<div class="abs" style="left:1301.00px;top:720px;font-size:14.72px;">31221485100049</div>
<div class="abs" style="left:1296.20px;top:733.80px;width:184.40px;height:7px;border-bottom:1px solid #cecece;border-radius:0 0 3px 3px;"></div>
<div class="abs" style="left:634.60px;top:756px;font-size:14.72px;">1071C</div>
<div class="abs" style="left:629.20px;top:770.00px;width:184.70px;height:7px;border-bottom:1px solid #cecece;border-radius:0 0 3px 3px;"></div>
<div class="abs" style="left:1296.20px;top:770.00px;width:184.40px;height:7px;border-bottom:1px solid #cecece;border-radius:0 0 3px 3px;"></div>
<div class="abs" style="left:629.20px;top:806.60px;width:184.70px;height:7px;border-bottom:1px solid #cecece;border-radius:0 0 3px 3px;"></div>
<div class="abs" style="left:1296.20px;top:806.60px;width:184.40px;height:7px;border-bottom:1px solid #cecece;border-radius:0 0 3px 3px;"></div>
<svg style="left:628px;top:826px" width="17.9" height="17.9" viewBox="0 0 17.9 17.9"><rect x="0" y="0" width="17.9" height="17.9" rx="2.8" fill="#1b78f6"/><path d="M4.1 9.3 7.7 13.100 14.600 4.700" fill="none" stroke="#fff" stroke-width="2.1" stroke-linecap="round" stroke-linejoin="round"/></svg>
<div class="abs" style="left:634.60px;top:865px;font-size:14.72px;">FR52312214851</div>
<div class="abs" style="left:629.20px;top:879.80px;width:184.70px;height:7px;border-bottom:1px solid #cecece;border-radius:0 0 3px 3px;"></div>
<div class="abs" style="left:826.40px;top:865px;font-size:14.72px;color:#0a1459;">Vérifier</div>
<svg style="left:877.75px;top:867.25px" width="12.70" height="12.70" viewBox="0 0 512 512" fill="#bababa"><path d="M256 8C119.043 8 8 119.083 8 256c0 136.997 111.043 248 248 248s248-111.003 248-248C504 119.083 392.957 8 256 8zm0 110c23.196 0 42 18.804 42 42s-18.804 42-42 42-42-18.804-42-42 18.804-42 42-42zm56 254c0 6.627-5.373 12-12 12h-88c-6.627 0-12-5.373-12-12v-24c0-6.627 5.373-12 12-12h12v-64h-12c-6.627 0-12-5.373-12-12v-24c0-6.627 5.373-12 12-12h64c6.627 0 12 5.373 12 12v100h12c6.627 0 12 5.373 12 12v24z"/></svg>
</div>
</body>
</html>
